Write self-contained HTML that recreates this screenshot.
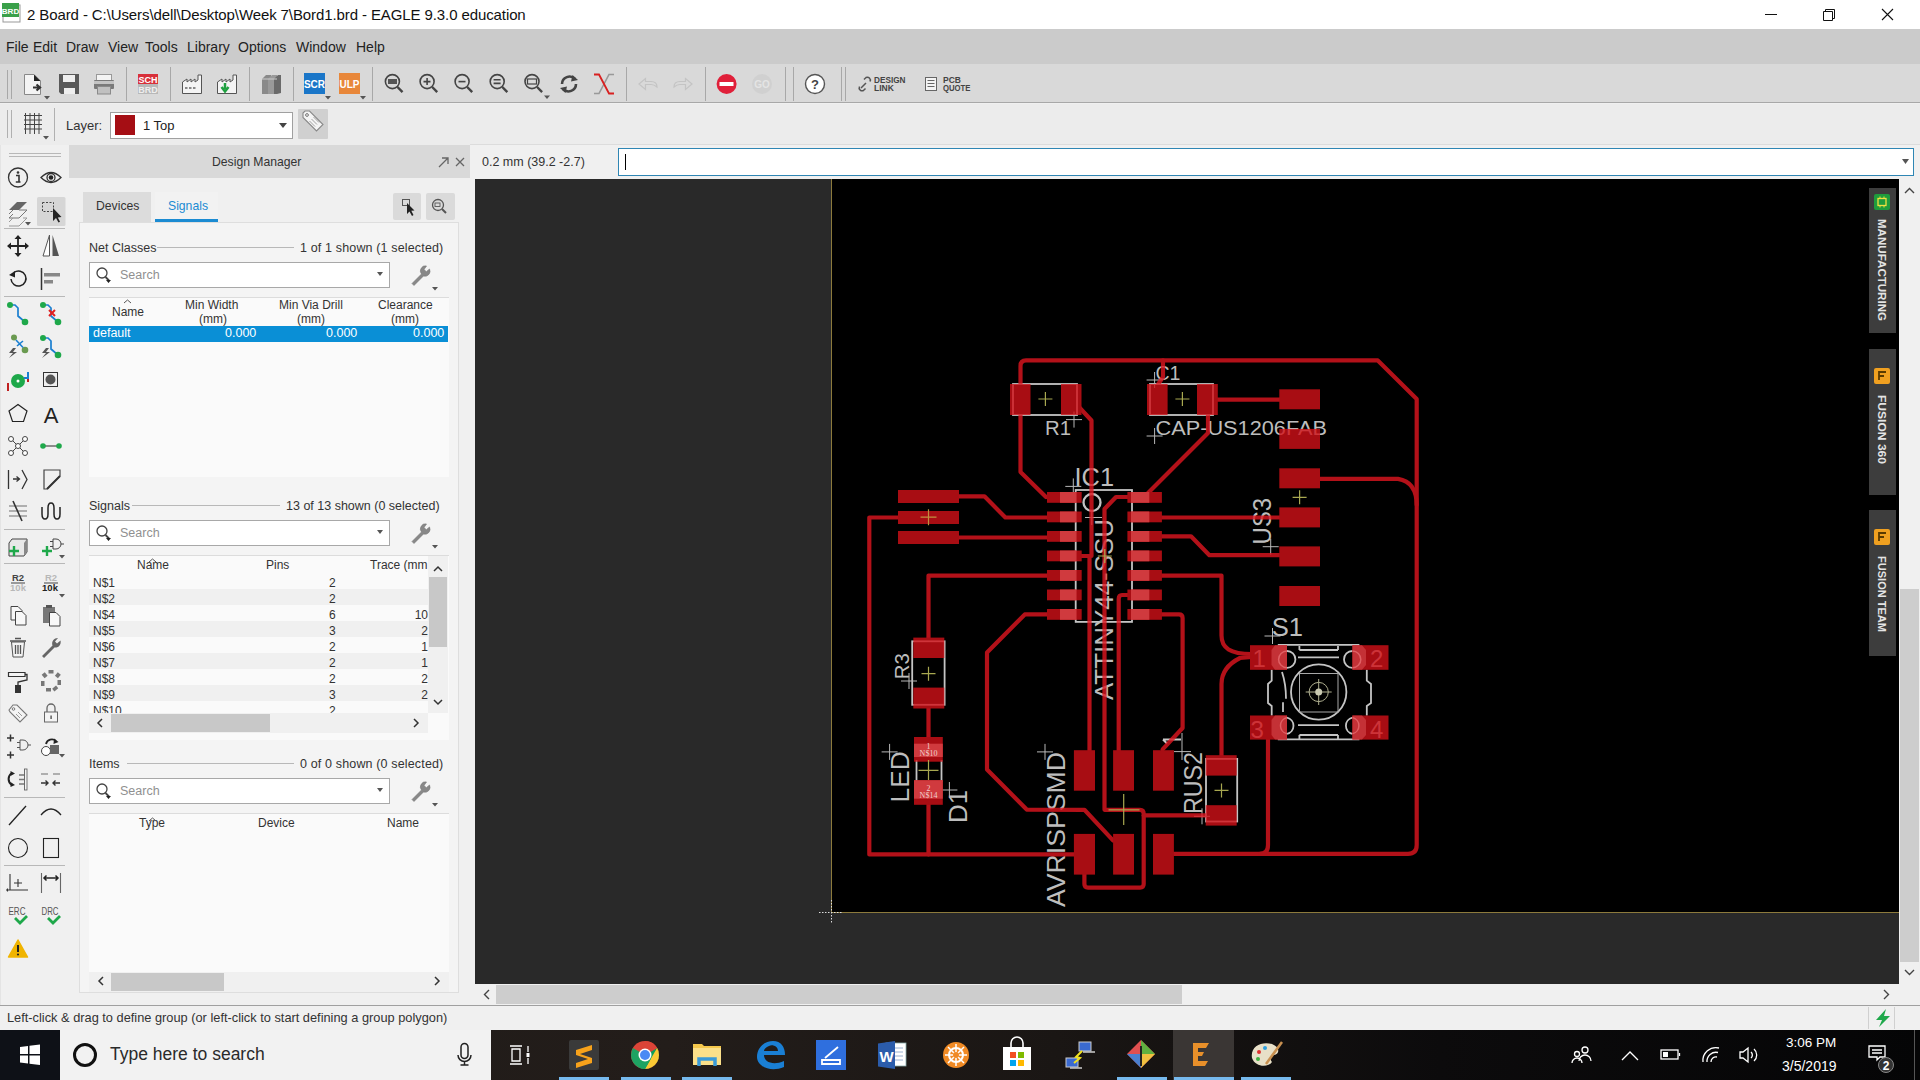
<!DOCTYPE html>
<html><head><meta charset="utf-8">
<style>
*{margin:0;padding:0;box-sizing:border-box}
html,body{width:1920px;height:1080px;overflow:hidden;background:#f0f0f0;font-family:"Liberation Sans",sans-serif;color:#333}
.a{position:absolute}
.t{position:absolute;white-space:nowrap;line-height:1}
</style></head><body>
<!-- title bar -->
<div class="a" style="left:0;top:0;width:1920px;height:29px;background:#fff"></div>
<div class="t" style="left:27px;top:7px;font-size:15px;color:#111;letter-spacing:-0.1px">2 Board - C:\Users\dell\Desktop\Week 7\Bord1.brd - EAGLE 9.3.0 education</div>
<!-- menu -->
<div class="a" style="left:0;top:29px;width:1920px;height:35px;background:#cbcbcb"></div>
<div class="t" style="left:6px;top:40px;font-size:14px;color:#222">File</div>
<div class="t" style="left:33px;top:40px;font-size:14px;color:#222">Edit</div>
<div class="t" style="left:66px;top:40px;font-size:14px;color:#222">Draw</div>
<div class="t" style="left:108px;top:40px;font-size:14px;color:#222">View</div>
<div class="t" style="left:145px;top:40px;font-size:14px;color:#222">Tools</div>
<div class="t" style="left:187px;top:40px;font-size:14px;color:#222">Library</div>
<div class="t" style="left:238px;top:40px;font-size:14px;color:#222">Options</div>
<div class="t" style="left:296px;top:40px;font-size:14px;color:#222">Window</div>
<div class="t" style="left:356px;top:40px;font-size:14px;color:#222">Help</div>
<!-- toolbar -->
<div class="a" style="left:0;top:64px;width:1920px;height:39px;background:#d9d9d9;border-bottom:1px solid #a8a8a8"></div>
<!-- layer bar -->
<div class="a" style="left:0;top:104px;width:1920px;height:41px;background:#ececec"></div>
<!-- toolbar icons -->
<svg class="a" style="left:0;top:62px" width="1000" height="44" viewBox="0 62 1000 44">
<g stroke="#a8a8a8" stroke-width="1"><path d="M7.5,70 V99 M11.5,70 V99 M126.5,67 V101 M170.5,67 V101 M249.5,67 V101 M293.5,67 V101 M372.5,67 V101 M626.5,67 V101 M705.5,67 V101 M785.5,67 V101 M793.5,67 V101 M841.5,67 V101 M845.5,67 V101"/></g>
<!-- new -->
<path d="M24.5,74.5 H34 L40.5,81 V94.5 H24.5 Z" fill="#f4f4f4" stroke="#888"/>
<path d="M34,74.5 L40.5,81 H34 Z" fill="#222"/>
<path d="M33,87.5 H39 M36.5,84.5 L40,87.5 L36.5,90.5" stroke="#333" stroke-width="2.2" fill="none"/>
<path d="M44,96 h6 l-3,3.5z" fill="#555"/>
<!-- save -->
<path d="M59,74 H79 V94 H61 L59,92 Z" fill="#595959"/>
<rect x="63" y="75" width="12" height="7" fill="#eee"/><rect x="64" y="88" width="11" height="6" fill="#eee"/>
<!-- print -->
<rect x="96.5" y="74.5" width="15" height="7" fill="#f4f4f4" stroke="#999"/>
<rect x="94" y="80" width="20" height="9" rx="1" fill="#7a7a7a"/>
<rect x="94" y="81" width="20" height="3" fill="#c4c4c4"/>
<rect x="97.5" y="86.5" width="13" height="7.5" fill="#c0c0c0" stroke="#8a8a8a"/>
<!-- sch brd -->
<rect x="138" y="74" width="20" height="10" fill="#d8303a"/><rect x="138" y="84" width="20" height="10" fill="#b8b8b8"/>
<text x="148" y="82.8" font-family="Liberation Sans" font-weight="bold" font-size="9" fill="#fff" text-anchor="middle">SCH</text>
<text x="148" y="92.8" font-family="Liberation Sans" font-weight="bold" font-size="9" fill="#eee" text-anchor="middle">BRD</text>
<!-- cam -->
<path d="M182.5,93.5 V82 L187,79 V82 L191,79 V82 L195,79 V82 L198,80 V75 H201.5 V93.5 Z" fill="#f4f4f4" stroke="#555"/>
<path d="M185,88 H197" stroke="#666" stroke-width="1.5" stroke-dasharray="2.5 1.5"/>
<path d="M217.5,93.5 V82 L222,79 V82 L226,79 V82 L230,79 V82 L233,80 V75 H236.5 V93.5 Z" fill="#f4f4f4" stroke="#555"/>
<path d="M225,83 V89 M221.5,87 L225,91.5 L228.5,87" stroke="#1fa040" stroke-width="2.5" fill="none"/>
<!-- library -->
<path d="M262,79 L266,75 H271 V94 H262 Z" fill="#8a8a8a"/><path d="M268,79 L272,75 H277 V94 H268 Z" fill="#9a9a9a"/><path d="M274,79 L278,75 H281 V93 L277,94 H274 Z" fill="#6a6a6a"/>
<path d="M262,79 H277" stroke="#ccc"/>
<!-- scr ulp -->
<rect x="304" y="73" width="21" height="21" fill="#1a76c8"/><text x="314.5" y="88" font-family="Liberation Sans" font-weight="bold" font-size="10" fill="#fff" text-anchor="middle">SCR</text>
<path d="M325,96 h6 l-3,3.5z" fill="#555"/>
<rect x="339" y="73" width="21" height="21" fill="#e8873a"/><text x="349.5" y="88" font-family="Liberation Sans" font-weight="bold" font-size="10" fill="#fff" text-anchor="middle">ULP</text>
<path d="M360,96 h6 l-3,3.5z" fill="#555"/>
<!-- zooms -->
<g fill="none" stroke="#444" stroke-width="1.6">
<circle cx="392.4" cy="81.6" r="7"/><path d="M397.5,87 L402.5,92.2" stroke-width="2.4"/>
<circle cx="427.1" cy="81.6" r="7"/><path d="M432.2,87 L437.2,92.2" stroke-width="2.4"/><path d="M423.5,81.6 h7 M427.1,78 v7"/>
<circle cx="462.1" cy="81.6" r="7"/><path d="M467.2,87 L472.2,92.2" stroke-width="2.4"/><path d="M458.5,81.6 h7"/>
<circle cx="497.2" cy="81.6" r="7"/><path d="M502.3,87 L507.3,92.2" stroke-width="2.4"/><path d="M493.6,79.8 h7 M493.6,83.4 h7"/>
<circle cx="532" cy="81.6" r="7"/><path d="M537.1,87 L542.1,92.2" stroke-width="2.4"/><rect x="527.5" y="79" width="9" height="5" stroke-width="1.2"/>
</g>
<rect x="388" y="79" width="9" height="5" fill="#555"/>
<path d="M544,95.5 h6 l-3,3.5z" fill="#555"/>
<!-- redraw -->
<path d="M562,84 A7.5,7.5 0 0 1 575,79" fill="none" stroke="#444" stroke-width="2.6"/><path d="M572.5,75 L578,80 L571,81.5Z" fill="#444"/>
<path d="M576,84 A7.5,7.5 0 0 1 563,89" fill="none" stroke="#444" stroke-width="2.6"/><path d="M565.5,93 L560,88 L567,86.5Z" fill="#444"/>
<!-- ratsnest -->
<path d="M594,93.5 H599 L609,74.5 H614" fill="none" stroke="#999" stroke-width="1.6"/>
<path d="M594,74.5 H599 L609,93.5 H614" fill="none" stroke="#d82020" stroke-width="1.8"/>
<!-- undo redo -->
<path d="M639,84 L645.5,78.5 V81.5 H651 Q657,81.5 657,87 Q654,84.5 651,84.5 H645.5 V89.5 Z" fill="none" stroke="#c4c4c4" stroke-width="1.2"/>
<path d="M692,84 L685.5,78.5 V81.5 H680 Q674,81.5 674,87 Q677,84.5 680,84.5 H685.5 V89.5 Z" fill="none" stroke="#c4c4c4" stroke-width="1.2"/>
<!-- stop / go -->
<circle cx="726.6" cy="84" r="10" fill="#e0203a"/><rect x="719.5" y="82" width="14" height="4" fill="#fff"/>
<circle cx="762" cy="84" r="10" fill="#d0d0d0"/><text x="762" y="88" font-family="Liberation Sans" font-size="10" font-weight="bold" fill="#e4e4e4" text-anchor="middle">GO</text>
<!-- help -->
<circle cx="815" cy="84" r="9.5" fill="#fff" stroke="#555" stroke-width="1.4"/><text x="815" y="89" font-family="Liberation Sans" font-weight="bold" font-size="13" fill="#444" text-anchor="middle">?</text>
<!-- design link -->
<path d="M861,88 L866,83 M859.5,86.5 a3,3 0 0 0 4,4 l2,-2 M870,81.5 a3,3 0 0 0 -4,-4 l-2,2" fill="none" stroke="#555" stroke-width="1.5"/>
<text x="874" y="83" font-family="Liberation Sans" font-weight="bold" font-size="8.5" fill="#444" textLength="31.5" lengthAdjust="spacingAndGlyphs">DESIGN</text>
<text x="874" y="91" font-family="Liberation Sans" font-weight="bold" font-size="8.5" fill="#444">LINK</text>
<rect x="925.5" y="77.5" width="11" height="13" fill="#f4f4f4" stroke="#666"/><path d="M927.5,80.5 h7 M927.5,83.5 h7 M927.5,86.5 h7" stroke="#666"/>
<text x="943" y="83" font-family="Liberation Sans" font-weight="bold" font-size="8.5" fill="#444">PCB</text>
<text x="943" y="91" font-family="Liberation Sans" font-weight="bold" font-size="8.5" fill="#444" textLength="27.5" lengthAdjust="spacingAndGlyphs">QUOTE</text>
</svg>
<!-- layer bar -->
<svg class="a" style="left:0;top:104px" width="340" height="41" viewBox="0 104 340 41">
<g stroke="#b0b0b0"><path d="M7.5,110 V138 M11.5,110 V138 M54.5,108 V141"/></g>
<g stroke="#444" stroke-width="1"><path d="M25.5,113 V134 M30,113 V134 M34.5,113 V134 M39,113 V134 M24,115.5 H42 M24,120 H42 M24,124.5 H42 M24,129 H42"/></g>
<path d="M43,136 h6 l-3,3.5z" fill="#555"/>
<rect x="110.5" y="112.5" width="182" height="26" fill="#fff" stroke="#a0a0a0"/>
<rect x="115" y="115" width="20" height="20" fill="#a50e14"/>
<path d="M279,123 h8 l-4,5z" fill="#444"/>
<rect x="298" y="109" width="30" height="30" rx="1" fill="#d0d0d0"/>
<path d="M303,117 V113 L305,111 H309.5 L323,124.5 L316.5,131 L303,117.5 Z" fill="#f4f4f4" stroke="#888" stroke-width="1.1"/>
<circle cx="307" cy="115" r="1.4" fill="none" stroke="#777"/>
<path d="M309.5,121 l5.5,5.5 M311.5,119 l5.5,5.5 M313.5,117 l5.5,5.5" stroke="#999" stroke-width="0.9"/>
</svg>
<div class="t" style="left:66px;top:119px;font-size:13px;color:#333">Layer:</div>
<div class="t" style="left:143px;top:119px;font-size:13px;color:#222">1 Top</div>

<!-- left palette -->
<div class="a" style="left:0;top:145px;width:70px;height:860px;background:#f0f0f0;border-right:1px solid #d4d4d4;border-left:1px solid #e4e4e4"></div>

<svg class="a" style="left:0;top:145px" width="69" height="860" viewBox="0 145 69 860">
<g stroke="#b8b8b8" stroke-width="1"><path d="M9,153.5 H61 M9,156.5 H61 M4,228.5 H65 M4,296.5 H65 M4,529.5 H65 M4,563.5 H65 M4,797.5 H65 M4,865.5 H65"/></g>
<rect x="37" y="197" width="28.5" height="29" rx="1.5" fill="#d6d6d6"/>
<g fill="none" stroke="#333" stroke-width="1.3">
<!-- info -->
<circle cx="18" cy="177.5" r="9.5"/>
<!-- eye -->
<path d="M41,177.5 Q51,167.5 61,177.5 Q51,187.5 41,177.5 Z"/>
<circle cx="51" cy="177.5" r="4"/>
</g>
<circle cx="18" cy="172.5" r="1.3" fill="#333"/><path d="M16,175.5 h3 v6.5 h1.5 M15.8,182 h4.5" stroke="#333" stroke-width="1.6" fill="none"/>
<circle cx="51" cy="177.5" r="2.3" fill="#222"/>
<!-- layers -->
<path d="M9,210 L17,202 H27 L19,210 Z" fill="#666"/>
<path d="M9,214 L13,210 M19,210 H27 L19,218 H9 L13,214" fill="none" stroke="#777"/>
<path d="M9,222 L13,218 M23,218 H27 L19,226 H9" fill="none" stroke="#999"/>
<path d="M25,222 h6 l-3,3.5z" fill="#555"/>
<!-- group -->
<rect x="42.5" y="202.5" width="11" height="9" fill="none" stroke="#444" stroke-dasharray="2 1.5"/>
<path d="M53,208 L53,221 L56,218 L58.5,222.5 L60,221.7 L57.8,217.5 L61.5,217 Z" fill="#222"/>
<!-- move -->
<path d="M18,236 V256 M8,246 H28" stroke="#222" stroke-width="1.8"/>
<path d="M18,235 l-3.5,4h7z M18,257 l-3.5,-4h7z M7,246 l4,-3.5v7z M29,246 l-4,-3.5v7z" fill="#222"/>
<!-- mirror -->
<path d="M49.5,235 L43,256 H49.5 Z" fill="#fff" stroke="#555"/><path d="M52.5,235 L59,256 H52.5 Z" fill="#555"/>
<!-- rotate -->
<path d="M11,279 A7.5,7.5 0 1 0 14,272.5" fill="none" stroke="#222" stroke-width="1.5"/><path d="M9,275 L15,271 L15,277.5 Z" fill="#222"/>
<!-- align -->
<path d="M41.5,268 V290" stroke="#333" stroke-width="1.5"/><rect x="44" y="273" width="16" height="3.5" fill="#888"/><rect x="44" y="280" width="9" height="3.5" fill="#888"/>
<!-- route -->
<path d="M10,305 H15 L18,308 V316 L25,322" fill="none" stroke="#1a7fd0" stroke-width="1.7"/>
<circle cx="10" cy="305" r="3" fill="#1ea84a"/><circle cx="25" cy="322" r="3.3" fill="#1ea84a"/>
<path d="M43,305 H48 L51,308 V316 L58,322" fill="none" stroke="#1a7fd0" stroke-width="1.7"/>
<circle cx="43" cy="305" r="3" fill="#1ea84a"/><circle cx="58" cy="322" r="3.3" fill="#1ea84a"/>
<path d="M49,310 l6,6 M55,310 l-6,6" stroke="#e02020" stroke-width="2"/>
<!-- autorouter / optimize -->
<circle cx="14" cy="337.5" r="3" fill="#6a9a50"/><circle cx="25" cy="350" r="3.3" fill="#6a9a50"/>
<path d="M16,340 L23,347.5 M17,346 L23,341" stroke="#1a7fd0" stroke-width="1.6"/>
<path d="M13,348 L9,353 H13 L9,358 L17,352 H13 L16,348 Z" fill="#555"/>
<path d="M43,338 H48 L51,341 V349 L58,355" fill="none" stroke="#1a7fd0" stroke-width="1.7"/>
<circle cx="43" cy="338" r="3" fill="#1ea84a"/><circle cx="58" cy="355" r="3.3" fill="#1ea84a"/>
<path d="M46,348 L42,353 H46 L42,358 L50,352 H46 L49,348 Z" fill="#555"/>
<!-- via -->
<path d="M8,391 V383 M28,382 V374" stroke="#c02020" stroke-width="2"/>
<circle cx="18" cy="381" r="7" fill="#1ea84a"/><circle cx="18" cy="381" r="1.5" fill="#fff"/>
<path d="M24,378 H28 V372" stroke="#1a7fd0" stroke-width="2" fill="none"/>
<rect x="43.5" y="372.5" width="14" height="14" fill="none" stroke="#333"/><circle cx="50.5" cy="379.5" r="5" fill="#555"/>
<!-- polygon -->
<path d="M18,404.5 L27,411 L23.5,421.5 H12.5 L9,411 Z" fill="none" stroke="#222" stroke-width="1.2"/>
<!-- text A -->
<text x="51" y="423" font-family="Liberation Sans" font-size="22" fill="#222" text-anchor="middle">A</text>
<!-- airwire -->
<g stroke="#444" fill="#fff" stroke-width="1"><path d="M11,439 L25,453 M25,439 L11,453"/><circle cx="11" cy="439" r="2.5"/><circle cx="25" cy="439" r="2.5"/><circle cx="11" cy="453" r="2.5"/><circle cx="25" cy="453" r="2.5"/><circle cx="18" cy="446" r="2.5"/></g>
<path d="M42,446 H60" stroke="#555" stroke-width="1.3"/><circle cx="43" cy="446" r="2.8" fill="#1ea84a"/><circle cx="59" cy="446" r="2.8" fill="#1ea84a"/>
<!-- attribute / miter -->
<path d="M8.5,470 V489 M13,479 H19 M16.5,476.5 L19.5,479 L16.5,481.5 M22,470 L27,479.5 L22,489" fill="none" stroke="#333" stroke-width="1.3"/>
<path d="M44,489 V470 H60 V476 L47,489 Z" fill="none" stroke="#444" stroke-width="1.2"/><path d="M47,489 L60,476" stroke="#333" stroke-width="2"/>
<!-- meander -->
<path d="M9,506 H27 M9,511 H27 M9,516 H27" stroke="#999" stroke-width="1.3"/><path d="M13,501 L22,521" stroke="#333" stroke-width="1.6"/>
<path d="M42,507 V514 Q42,519 45,519 Q48,519 48,514 V508 Q48,503 51,503 Q54,503 54,508 V514 Q54,519 57,519 Q60,519 60,514 V507" fill="none" stroke="#222" stroke-width="1.5"/>
<!-- add -->
<path d="M9,543 L12,539 H27 V552 L24,556 H9 Z" fill="#e8e8e8" stroke="#444" stroke-width="1"/>
<path d="M24,543 L27,539 V552 L24,556Z" fill="#888"/>
<path d="M9,551 H19 M14,546 V556" stroke="#1ea84a" stroke-width="2.4"/>
<path d="M53,539 h3 a5,5 0 0 1 0,10 h-3 Z M50,541.5 h3 M50,546.5 h3 M61,544 h3" fill="none" stroke="#444" stroke-width="1"/>
<path d="M42,551 H52 M47,546 V556" stroke="#1ea84a" stroke-width="2.4"/>
<path d="M59,555 h6 l-3,3.5z" fill="#555"/>
<!-- R2 10k -->
<text x="18" y="581" font-family="Liberation Sans" font-weight="bold" font-size="9.5" fill="#444" text-anchor="middle">R2</text>
<path d="M11,583 H25" stroke="#444"/>
<text x="18" y="591" font-family="Liberation Sans" font-weight="bold" font-size="9.5" fill="#b8b8b8" text-anchor="middle">10k</text>
<text x="51" y="581" font-family="Liberation Sans" font-weight="bold" font-size="9.5" fill="#b8b8b8" text-anchor="middle">R2</text>
<path d="M44,583 H58" stroke="#444"/>
<text x="50" y="591" font-family="Liberation Sans" font-weight="bold" font-size="9.5" fill="#222" text-anchor="middle">10k</text>
<path d="M59,594 h6 l-3,3.5z" fill="#555"/>
<!-- copy paste -->
<path d="M11,606.5 H18 L22,610.5 V620 H11 Z" fill="#f8f8f8" stroke="#444"/><path d="M15.5,611.5 H22 L26,615.5 V625 H15.5 Z" fill="#f8f8f8" stroke="#444"/>
<path d="M43,607 H55 V623 H43 Z" fill="#777"/><rect x="46" y="605" width="6" height="3" fill="#555"/>
<path d="M49.5,612.5 H56 L60,616.5 V626 H49.5 Z" fill="#f8f8f8" stroke="#444"/>
<!-- delete -->
<path d="M11.5,642 H24.5 L23,657 H13 Z" fill="#f4f4f4" stroke="#555"/><path d="M10,641 H26 M15,638.5 H21" stroke="#555" stroke-width="1.4"/>
<path d="M15.5,645 V654 M18,645 V654 M20.5,645 V654" stroke="#555" stroke-width="1.3"/>
<!-- wrench -->
<path d="M42,656 L52.5,645.5 A5.5,5.5 0 0 1 58,638 L55,641.5 L57,643.5 L60.5,640.5 A5.5,5.5 0 0 1 54.5,647.5 L44,658 Z" fill="#666"/>
<!-- paint -->
<path d="M8.5,672.5 H25 V676.5 H8.5 Z" fill="#f4f4f4" stroke="#333" stroke-width="1.2"/><path d="M25,674.5 H27 V680 L18,682 V686" fill="none" stroke="#333" stroke-width="1.3"/><rect x="15" y="685" width="6" height="8" fill="#333"/>
<!-- polygon dots -->
<g fill="#777"><rect x="48.5" y="670" width="5" height="3.5"/><rect x="56" y="673" width="4" height="4.5" transform="rotate(40 58 675)"/><rect x="57.5" y="680" width="3.5" height="5"/><rect x="53" y="687" width="5" height="3.5" transform="rotate(-40 55 689)"/><rect x="46" y="688" width="5" height="3.5"/><rect x="41" y="681" width="3.5" height="5"/><rect x="42.5" y="673" width="4" height="4.5" transform="rotate(-40 44.5 675)"/></g>
<!-- tag -->
<path d="M9,710 L13,705 H17 L27,715 L20,722 L10,712 Z" fill="#f4f4f4" stroke="#777" stroke-width="1.1"/><circle cx="13.5" cy="709" r="1.3" fill="none" stroke="#777"/><path d="M16,714 l4,4 M18,712 l4,4" stroke="#999"/>
<!-- lock -->
<rect x="44.5" y="712" width="13" height="10" fill="#f4f4f4" stroke="#666"/><path d="M47,712 V708 A4,4 0 0 1 55,708 V712" fill="none" stroke="#666" stroke-width="1.3"/><rect x="50.3" y="715.5" width="1.6" height="3.5" fill="#666"/>
<!-- gate add -->
<path d="M7,738 H14 M10.5,734.5 V741.5 M7,755 H14 M10.5,751.5 V758.5" stroke="#333" stroke-width="1.5"/>
<path d="M20,740 h3 a5,5 0 0 1 0,10 h-3 Z M17,742.5 h3 M17,747.5 h3 M28,745 h3" fill="none" stroke="#555" stroke-width="1"/>
<!-- replace -->
<circle cx="46" cy="751" r="4.5" fill="#fff" stroke="#444"/><rect x="50" y="745" width="9" height="9" fill="#666"/>
<path d="M46,744 A6,6 0 0 1 56,741" fill="none" stroke="#222" stroke-width="1.8"/><path d="M54,738.5 L58.5,742 L53.5,744Z" fill="#222"/>
<path d="M59,754 h6 l-3,3.5z" fill="#555"/>
<!-- swap -->
<path d="M12,773 A7,7 0 0 0 12,785" fill="none" stroke="#222" stroke-width="2"/><path d="M10.5,771 L15,773.5 L10.5,776Z M10.5,782 L15,785 L10.5,787Z" fill="#222"/>
<path d="M25,770 V789 M19,775 H25 M19,779.5 H25 M19,784 H25" stroke="#777" stroke-width="1.4" fill="none"/><rect x="24.5" y="769" width="2.5" height="21" fill="#f4f4f4" stroke="#555" stroke-width="0.8"/>
<path d="M41,774 H48 M53,774 H60" stroke="#999" stroke-width="1.4"/>
<path d="M41,783 H48 M45.5,780.5 L48,783 L45.5,785.5 M60,783 H53 M55.5,780.5 L53,783 L55.5,785.5" fill="none" stroke="#333" stroke-width="1.4"/>
<!-- line arc -->
<path d="M9,825 L26,806" stroke="#222" stroke-width="1.3"/>
<path d="M41,815 Q51,803 61,815" fill="none" stroke="#222" stroke-width="1.3"/>
<!-- circle rect -->
<circle cx="18" cy="848" r="9.5" fill="none" stroke="#222" stroke-width="1.1"/>
<rect x="43.5" y="838.5" width="15" height="19" fill="none" stroke="#222" stroke-width="1.1"/>
<!-- mark / dimension -->
<path d="M10,874 V890 M7,890 H28 M18,879 V887 M14,883 H22 M7.5,888.5 v3 M6,890 h3" stroke="#333" stroke-width="1.1" fill="none"/>
<path d="M41.5,873 V893 M60.5,873 V893" stroke="#666" stroke-width="1.1"/><path d="M44,878 H58 M46.5,875.5 L44,878 L46.5,880.5 M55.5,875.5 L58,878 L55.5,880.5" fill="none" stroke="#222" stroke-width="1.5"/>
<!-- erc drc -->
<text x="17" y="915" font-family="Liberation Sans" font-size="10.5" fill="#555" text-anchor="middle" textLength="17" lengthAdjust="spacingAndGlyphs">ERC</text>
<path d="M15,918 L20,923 L27,916" fill="none" stroke="#1ea84a" stroke-width="2.8"/>
<text x="50" y="915" font-family="Liberation Sans" font-size="10.5" fill="#555" text-anchor="middle" textLength="17" lengthAdjust="spacingAndGlyphs">DRC</text>
<path d="M48,918 L53,923 L60,916" fill="none" stroke="#1ea84a" stroke-width="2.8"/>
<!-- warning -->
<path d="M18,940 L27.5,957 H8.5 Z" fill="#f0b400" stroke="#f0b400" stroke-linejoin="round" stroke-width="1.5"/>
<path d="M18,945 V952" stroke="#222" stroke-width="2"/><circle cx="18" cy="954.5" r="1.1" fill="#222"/>
</svg>

<!-- design manager -->
<div class="a" style="left:69px;top:145px;width:401px;height:33px;background:#d9d9d9"></div>
<div class="t" style="left:212px;top:156px;font-size:12.2px;color:#333">Design Manager</div>
<svg class="a" style="left:430px;top:150px" width="40" height="24"><path d="M9,17 L18,8 M12,8 H18 V14" stroke="#666" stroke-width="1.3" fill="none"/><path d="M26,8 L34,16 M34,8 L26,16" stroke="#666" stroke-width="1.3"/></svg>
<div class="a" style="left:69px;top:178px;width:401px;height:827px;background:#f0f0f0"></div>
<div class="a" style="left:83px;top:192px;width:68px;height:30px;background:#dcdcdc"></div>
<div class="t" style="left:96px;top:200px;font-size:12.2px;color:#333">Devices</div>
<div class="a" style="left:155px;top:192px;width:63px;height:30px;background:#f2f2f2;border-bottom:3px solid #1b8bd2"></div>
<div class="t" style="left:168px;top:200px;font-size:12.2px;color:#1b8bd2">Signals</div>
<div class="a" style="left:393px;top:193px;width:28px;height:27px;background:#dadada;border-radius:2px"></div>
<div class="a" style="left:426px;top:193px;width:29px;height:27px;background:#dadada;border-radius:2px"></div>
<svg class="a" style="left:393px;top:193px" width="62" height="27">
<rect x="9.5" y="6.5" width="7" height="6" fill="none" stroke="#555"/><path d="M14,10 L14,21 L16.5,18.5 L19,23 L20.5,22 L18.3,17.8 L21.5,17.5 Z" fill="#222"/>
<circle cx="45" cy="12" r="5.5" fill="none" stroke="#555" stroke-width="1.3"/><path d="M49,16 L53,20" stroke="#555" stroke-width="2"/><rect x="42" y="10" width="5" height="3.5" fill="none" stroke="#555" stroke-width="0.9"/>
</svg>
<div class="a" style="left:79px;top:222px;width:380px;height:771px;background:#f4f4f4;border:1px solid #dedede"></div>

<!-- net classes -->
<div class="t" style="left:89px;top:242px;font-size:12.5px;color:#333">Net Classes</div>
<div class="a" style="left:157px;top:247px;width:137px;height:1px;background:#b8b8b8"></div>
<div class="t" style="left:300px;top:242px;font-size:12.5px;color:#333;letter-spacing:0.15px">1 of 1 shown (1 selected)</div>
<div class="a" style="left:89px;top:262px;width:301px;height:26px;background:#fff;border:1px solid #a8a8a8"></div>
<div class="t" style="left:120px;top:269px;font-size:12.5px;color:#909090">Search</div>
<div class="a" style="left:89px;top:297px;width:360px;height:180px;background:#fafafa;border-top:1px solid #dcdcdc"></div>
<div class="t" style="left:112px;top:306px;font-size:12px;color:#333">Name</div>
<div class="t" style="left:185px;top:299px;font-size:12px;color:#333">Min Width</div>
<div class="t" style="left:199px;top:313px;font-size:12px;color:#333">(mm)</div>
<div class="t" style="left:279px;top:299px;font-size:12px;color:#333">Min Via Drill</div>
<div class="t" style="left:297px;top:313px;font-size:12px;color:#333">(mm)</div>
<div class="t" style="left:378px;top:299px;font-size:12px;color:#333">Clearance</div>
<div class="t" style="left:391px;top:313px;font-size:12px;color:#333">(mm)</div>
<div class="a" style="left:89px;top:326px;width:359px;height:16px;background:#0a8fd6"></div>
<div class="t" style="left:93px;top:327px;font-size:12.5px;color:#fff">default</div>
<div class="t" style="left:225px;top:327px;font-size:12.5px;color:#fff">0.000</div>
<div class="t" style="left:326px;top:327px;font-size:12.5px;color:#fff">0.000</div>
<div class="t" style="left:413px;top:327px;font-size:12.5px;color:#fff">0.000</div>

<!-- signals -->
<div class="t" style="left:89px;top:500px;font-size:12.5px;color:#333">Signals</div>
<div class="a" style="left:132px;top:505px;width:148px;height:1px;background:#b8b8b8"></div>
<div class="t" style="left:286px;top:500px;font-size:12.5px;color:#333">13 of 13 shown (0 selected)</div>
<div class="a" style="left:89px;top:520px;width:301px;height:26px;background:#fff;border:1px solid #a8a8a8"></div>
<div class="t" style="left:120px;top:527px;font-size:12.5px;color:#909090">Search</div>
<div class="a" style="left:89px;top:555px;width:360px;height:185px;background:#fafafa;border-top:1px solid #dcdcdc"></div>
<div class="t" style="left:137px;top:559px;font-size:12px;color:#333">Name</div>
<div class="t" style="left:266px;top:559px;font-size:12px;color:#333">Pins</div>
<div class="t" style="left:370px;top:559px;font-size:12px;color:#333">Trace (mm</div>
<div class="a" style="left:89px;top:589px;width:339px;height:16px;background:#f0f0f0"></div>
<div class="a" style="left:89px;top:621px;width:339px;height:16px;background:#f0f0f0"></div>
<div class="a" style="left:89px;top:653px;width:339px;height:16px;background:#f0f0f0"></div>
<div class="a" style="left:89px;top:685px;width:339px;height:16px;background:#f0f0f0"></div>
<div style="position:absolute;left:93px;top:575px;font-size:12px;line-height:16px;color:#333;white-space:pre">N$1
N$2
N$4
N$5
N$6
N$7
N$8
N$9
N$10</div>
<div style="position:absolute;left:329px;top:575px;font-size:12px;line-height:16px;color:#333;white-space:pre;height:138px;overflow:hidden">2
2
6
3
2
2
2
3
2</div>
<div style="position:absolute;left:414px;top:575px;width:14px;font-size:12px;line-height:16px;color:#333;white-space:pre;overflow:hidden;height:138px;text-align:right"> 
 
10
 2
 1
 1
 2
 2
 </div>
<div class="a" style="left:89px;top:713px;width:360px;height:27px;background:#fafafa"></div>
<div class="a" style="left:428px;top:556px;width:20px;height:157px;background:#f0f0f0"></div>
<div class="a" style="left:429px;top:577px;width:18px;height:70px;background:#c8c8c8"></div>
<div class="a" style="left:89px;top:713px;width:339px;height:20px;background:#f0f0f0"></div>
<div class="a" style="left:111px;top:714px;width:159px;height:18px;background:#c8c8c8"></div>

<!-- items -->
<div class="t" style="left:89px;top:758px;font-size:12.5px;color:#333">Items</div>
<div class="a" style="left:127px;top:763px;width:167px;height:1px;background:#b8b8b8"></div>
<div class="t" style="left:300px;top:758px;font-size:12.5px;color:#333;letter-spacing:0.15px">0 of 0 shown (0 selected)</div>
<div class="a" style="left:89px;top:778px;width:301px;height:26px;background:#fff;border:1px solid #a8a8a8"></div>
<div class="t" style="left:120px;top:785px;font-size:12.5px;color:#909090">Search</div>
<div class="a" style="left:89px;top:813px;width:360px;height:159px;background:#fafafa;border-top:1px solid #dcdcdc"></div>
<div class="t" style="left:139px;top:817px;font-size:12px;color:#333">Type</div>
<div class="t" style="left:258px;top:817px;font-size:12px;color:#333">Device</div>
<div class="t" style="left:387px;top:817px;font-size:12px;color:#333">Name</div>
<div class="a" style="left:89px;top:972px;width:360px;height:20px;background:#f0f0f0"></div>
<div class="a" style="left:111px;top:973px;width:113px;height:18px;background:#c8c8c8"></div>

<svg class="a" style="left:69px;top:178px" width="401" height="827" viewBox="69 178 401 827">
<g fill="none" stroke="#444" stroke-width="1.3">
<circle cx="102" cy="273" r="5"/><path d="M105.5,277 L109,280.5" stroke-width="1.8"/>
<circle cx="102" cy="531" r="5"/><path d="M105.5,535 L109,538.5" stroke-width="1.8"/>
<circle cx="102" cy="789" r="5"/><path d="M105.5,793 L109,796.5" stroke-width="1.8"/>
</g>
<path d="M106,280 h5 l-2.5,3z M106,538 h5 l-2.5,3z M106,796 h5 l-2.5,3z" fill="#222"/>
<path d="M377,272 h6 l-3,4z M377,530 h6 l-3,4z M377,788 h6 l-3,4z" fill="#555"/>
<g fill="#888" stroke="#777" stroke-width="0.6">
<path d="M412,283.5 L421.5,274 A5,5 0 0 1 426.5,266 L424,269.5 L426.3,271.7 L429.5,269 A5,5 0 0 1 423.5,276 L414,285.5 Z"/>
<path d="M412,541.5 L421.5,532 A5,5 0 0 1 426.5,524 L424,527.5 L426.3,529.7 L429.5,527 A5,5 0 0 1 423.5,534 L414,543.5 Z"/>
<path d="M412,799.5 L421.5,790 A5,5 0 0 1 426.5,782 L424,785.5 L426.3,787.7 L429.5,785 A5,5 0 0 1 423.5,792 L414,801.5 Z"/>
</g>
<path d="M432,287 h6 l-3,3.5z M432,545 h6 l-3,3.5z M432,803 h6 l-3,3.5z" fill="#555"/>
<g fill="none" stroke="#555" stroke-width="1"><path d="M124,303 l3.5,-3 l3.5,3 M149,562 l3.5,-3 l3.5,3 M149,821 l3.5,-3 l3.5,3"/></g>
<g fill="none" stroke="#333" stroke-width="1.5"><path d="M434,571 l4,-4 l4,4 M434,700 l4,4 l4,-4 M102,719 l-4,4 l4,4 M414,719 l4,4 l-4,4 M103,977 l-4,4 l4,4 M435,977 l4,4 l-4,4"/></g>
</svg>
<!-- canvas -->
<div class="a" style="left:470px;top:144px;width:1450px;height:1px;background:#dcdcdc"></div>
<div class="a" style="left:470px;top:145px;width:1450px;height:34px;background:#f0f0f0"></div>
<div class="t" style="left:482px;top:156px;font-size:12.5px;color:#333">0.2 mm (39.2 -2.7)</div>
<div class="a" style="left:618px;top:148px;width:1296px;height:28px;background:#fff;border:1px solid #2f86b4"></div>
<div class="a" style="left:625px;top:154px;width:1px;height:16px;background:#000"></div>
<svg class="a" style="left:1900px;top:155px" width="12" height="12"><path d="M2,4 h7 l-3.5,5z" fill="#555"/></svg>
<div class="a" style="left:475px;top:179px;width:1424px;height:805px;background:#292929"></div>
<div class="a" style="left:831px;top:179px;width:1068px;height:734px;background:#000;border-left:1px solid #8c7a3c;border-bottom:1px solid #8c7a3c"></div>
<svg class="a" style="left:815px;top:896px" width="32" height="32"><path d="M4,16.5 H28 M16.5,4 V28" stroke="#ddd" stroke-width="1" stroke-dasharray="1.5 1.5"/></svg>
<!-- right panels -->
<div class="a" style="left:1869px;top:188px;width:27px;height:145px;background:#3d3d3d"></div>
<div class="a" style="left:1869px;top:349px;width:27px;height:146px;background:#3d3d3d"></div>
<div class="a" style="left:1869px;top:510px;width:27px;height:146px;background:#3d3d3d"></div>
<svg class="a" style="left:1869px;top:188px" width="27" height="470" viewBox="1869 188 27 470">
<rect x="1874" y="194" width="16" height="16" rx="2" fill="#1e9c3c"/><rect x="1878" y="198.5" width="8" height="7" fill="none" stroke="#f0e040" stroke-width="1.3"/>
<path d="M1880,196.5 v2 M1884,196.5 v2 M1880,205.5 v2 M1884,205.5 v2" stroke="#f0e040" stroke-width="1"/>
<rect x="1874" y="368" width="16" height="16" rx="2" fill="#f0a020"/><path d="M1879,380 V372 H1886 M1879,376 H1884" fill="none" stroke="#5a3a00" stroke-width="1.8"/>
<rect x="1874" y="529" width="16" height="16" rx="2" fill="#f0a020"/><path d="M1879,541 V533 H1886 M1879,537 H1884" fill="none" stroke="#5a3a00" stroke-width="1.8"/>
<g font-family="Liberation Sans" font-weight="bold" font-size="11" fill="#e4e4e4">
<text transform="translate(1877.5,219) rotate(90)" textLength="102" lengthAdjust="spacingAndGlyphs">MANUFACTURING</text>
<text transform="translate(1877.5,395) rotate(90)" textLength="69" lengthAdjust="spacingAndGlyphs">FUSION 360</text>
<text transform="translate(1877.5,556) rotate(90)" textLength="76" lengthAdjust="spacingAndGlyphs">FUSION TEAM</text>
</g>
</svg>
<!-- vertical scrollbar -->
<div class="a" style="left:1899px;top:179px;width:21px;height:805px;background:#f0f0f0"></div>
<div class="a" style="left:1900px;top:589px;width:19px;height:373px;background:#cdcdcd"></div>
<svg class="a" style="left:1899px;top:179px" width="21" height="805"><path d="M6,14 l4.5,-4.5 l4.5,4.5 M6,791 l4.5,4.5 l4.5,-4.5" fill="none" stroke="#444" stroke-width="1.4"/></svg>
<!-- horizontal scrollbar -->
<div class="a" style="left:475px;top:984px;width:1445px;height:21px;background:#f0f0f0"></div>
<div class="a" style="left:496px;top:985px;width:686px;height:19px;background:#cdcdcd"></div>
<svg class="a" style="left:475px;top:984px" width="1425" height="21"><path d="M14,6 l-4.5,4.5 l4.5,4.5 M1409,6 l4.5,4.5 l-4.5,4.5" fill="none" stroke="#444" stroke-width="1.4"/></svg>
<svg class="a" style="left:0;top:0" width="1920" height="1080" viewBox="0 0 1920 1080">
<!-- silkscreen outlines -->
<g fill="none" stroke="#c4c4c4" stroke-width="1.8">
<rect x="1013" y="384" width="64" height="31"/>
<rect x="1150" y="384" width="63" height="31"/>
<rect x="1075.7" y="490" width="56.3" height="131.9"/>
<circle cx="1092" cy="502.5" r="8.5" stroke-width="2.3"/>
<rect x="912.2" y="641.3" width="32.4" height="63.5"/>
<line x1="916.5" y1="760" x2="916.5" y2="782"/><line x1="941.5" y1="760" x2="941.5" y2="782"/>
<rect x="1206" y="758.9" width="31.2" height="62.6"/>
</g>
<g fill="none" stroke="#c4c4c4" stroke-width="1.8">
<path d="M1277.8,644.8 H1359.4 M1277.8,739.3 H1359.4"/>
<path d="M1271.7,669.8 V680.6 L1268,684 V703 L1271.7,706 V715.5 M1366.8,669.8 V680.6 L1371,684 V703 L1366.8,706 V715.5"/>
<path d="M1299.4,650 H1338 M1298,657.3 H1339 M1298,725.2 H1339 M1299.4,735 H1338"/>
<path d="M1299.4,646 V650 M1338,646 V650 M1299.4,739 V735 M1338,739 V735"/>
<circle cx="1318.7" cy="692" r="27.7"/>
<path d="M1282,672 Q1286,684 1286,698.7 M1283,702.3 V712"/>
<path d="M1287,651 A8.3,8.3 0 0 1 1287,667.8 M1287,717.6 A8.3,8.3 0 0 1 1287,733.8 M1352.4,651 A8.3,8.3 0 0 0 1352.4,667.8 M1352.4,717.6 A8.3,8.3 0 0 0 1352.4,733.8"/>
</g>
<g fill="none" stroke="#a8a8a8" stroke-width="1">
<rect x="1299.5" y="673.5" width="38.5" height="38.5"/>
</g>
<g fill="none" stroke="#b0b090" stroke-width="1">
<circle cx="1318.7" cy="692" r="9.6"/>
<path d="M1305.7,692 h26 M1318.7,679 v26"/>
</g>
<circle cx="1318.7" cy="692" r="3.5" fill="#c8c8b0"/>

<g font-family="Liberation Sans" fill="#bdbdbd">
<text x="1045" y="435" font-size="20.5" textLength="26" lengthAdjust="spacingAndGlyphs">R1</text>
<text x="1155.5" y="380" font-size="20" textLength="25" lengthAdjust="spacingAndGlyphs">C1</text>
<text x="1155.5" y="434.5" font-size="20" textLength="171.5" lengthAdjust="spacingAndGlyphs">CAP-US1206FAB</text>
<text x="1074.5" y="486" font-size="26" textLength="39.5" lengthAdjust="spacingAndGlyphs">IC1</text>
<text x="1271.7" y="636" font-size="25" textLength="31.3" lengthAdjust="spacingAndGlyphs">S1</text>
<text transform="translate(1113,700) rotate(-90)" font-size="26" textLength="181" lengthAdjust="spacingAndGlyphs">ATTINY44-SSU</text>
<text transform="translate(1270.7,544.4) rotate(-90)" font-size="26.5" textLength="46.6" lengthAdjust="spacingAndGlyphs">US3</text>
<text transform="translate(908.5,679.3) rotate(-90)" font-size="21" textLength="26" lengthAdjust="spacingAndGlyphs">R3</text>
<text transform="translate(909,802.4) rotate(-90)" font-size="25" textLength="51" lengthAdjust="spacingAndGlyphs">LED</text>
<text transform="translate(967.4,823) rotate(-90)" font-size="26" textLength="33" lengthAdjust="spacingAndGlyphs">D1</text>
<text transform="translate(1065,907) rotate(-90)" font-size="26.5" textLength="155" lengthAdjust="spacingAndGlyphs">AVRISPSMD</text>
<text transform="translate(1201.8,814) rotate(-90)" font-size="25.5" textLength="62" lengthAdjust="spacingAndGlyphs">RUS2</text>
<path d="M1163,739.5 H1181 M1163,739.5 L1167,743.5" stroke="#c8c8c8" stroke-width="2" fill="none"/>
</g>

<g fill="#bdbdbd" font-family="Liberation Sans" font-size="24">
<text x="1252.5" y="667">1</text><text x="1370" y="667">2</text><text x="1250.5" y="738">3</text><text x="1370" y="738">4</text>
</g>
<!-- origin crosses gray -->
<g stroke="#b8b8b8" stroke-width="1" fill="none">
<path d="M1066,419.6 h16 M1074,411.6 v16"/>
<path d="M1146.6,380 h16 M1154.6,372 v16"/>
<path d="M1146.6,436 h16 M1154.6,428 v16"/>
<path d="M1065.3,486.4 h16 M1073.3,478.4 v16"/>
<path d="M1264.5,636 h16 M1272.5,628 v16"/>
<path d="M1085,517.5 h17 M1091.8,510 v15"/>
<path d="M1262.7,546.7 h16 M1270.7,538.7 v16"/>
<path d="M901,681 h16 M909,673 v16"/>
<path d="M881.6,751.9 h16 M889.6,743.9 v16"/>
<path d="M941.4,790 h16 M949.4,782 v16"/>
<path d="M1037,751.9 h16 M1045,743.9 v16"/>
<path d="M1194,816.3 h16 M1202,808.3 v16"/>
<path d="M1174,751.6 h17 M1182,733 v27"/>
</g>
<g opacity="0.8">
<g fill="none" stroke="#e01620" stroke-width="4.2" stroke-linejoin="round" stroke-linecap="round">
<path d="M1046,497 L1020.5,472 L1020.5,366 Q1020.5,360.4 1026,360.4 L1377.8,360.4 L1416.7,399 L1416.7,845 Q1416.7,853.8 1408,853.8 L1174,853.8"/>
<path d="M1163,360.4 L1163,377 L1157,386"/>
<path d="M1078,406 L1091.5,420.5 L1091.5,556 L1081,556 M1089.5,556 L1089.5,752"/>
<path d="M1150,497 L1116,497 L1104.5,509 L1104.5,809.8 L1140,809.8 Q1143.7,809.8 1143.7,814 L1143.7,884 Q1143.7,887.6 1140,887.6 L1088,887.6 Q1084.4,887.6 1084.4,884 L1084.4,872"/>
<path d="M1208,413 L1208,433 L1148,493"/>
<path d="M1215,399.6 L1281,399.6"/>
<path d="M1318,478.9 L1398,478.9 Q1416.7,482 1416.7,505"/>
<path d="M1150,517.5 L1281,517.5"/>
<path d="M1150,536.3 L1191,536.3 L1209.4,555.2 L1281,555.2"/>
<path d="M1150,575.6 L1221.5,575.6 L1221.5,635.6 C1221.5,648 1230,654 1252,654"/>
<path d="M1252,657 L1240,658 C1228,664 1221.5,672 1221.5,684 L1221.5,757"/>
<path d="M1150,614.4 L1179,614.4 Q1182.6,614.4 1182.6,618 L1182.6,728 L1162.6,749.4"/>
<path d="M1130,595 L1122,595 Q1118.7,595 1118.7,599 L1118.7,752"/>
<path d="M959,496.3 L984.4,496.3 L1005.4,517.5 L1050,517.5"/>
<path d="M900,517.5 L869.3,517.5 L869.3,854.4 L1076,854.4"/>
<path d="M959,537.5 L1050,537.5"/>
<path d="M1050,575.6 L928.5,575.6 L928.5,640"/>
<path d="M928.5,706 L928.5,740 M928.5,802 L928.5,854.4"/>
<path d="M1050,614.4 L1024.8,614.4 L987,652.4 L987,769.6 L1026.7,809.6 L1084.4,809.8 L1113,840.4"/>
<path d="M1143.7,815.4 L1208,815.4"/>
<path d="M1268,739 L1268,845 Q1268,853.8 1260,853.8"/>
</g>
<g fill="#d21118">
<rect x="1010" y="384" width="20.5" height="31"/><rect x="1061" y="384" width="20.5" height="31"/>
<rect x="1147" y="384" width="20.6" height="31"/><rect x="1197" y="384" width="20.8" height="31"/>
<rect x="1279.3" y="389.3" width="40.7" height="20"/><rect x="1279.3" y="428.9" width="40.7" height="20"/>
<rect x="1279.3" y="468.3" width="40.7" height="20"/><rect x="1279.3" y="507.4" width="40.7" height="20"/>
<rect x="1279.3" y="546.4" width="40.7" height="20"/><rect x="1279.3" y="586" width="40.7" height="20"/>
<rect x="898" y="490" width="61" height="13"/><rect x="898" y="511" width="61" height="13"/><rect x="898" y="531" width="61" height="13"/>
<rect x="913.3" y="637.6" width="31" height="20.4"/><rect x="913.3" y="687.6" width="31" height="20.9"/>
<rect x="914" y="737" width="28.8" height="24.7"/><rect x="914" y="780.2" width="28.8" height="24.6"/>
<rect x="1073.9" y="750.2" width="21.1" height="40.5"/><rect x="1113.1" y="750.2" width="20.9" height="40.5"/><rect x="1153" y="750.2" width="20.9" height="40.5"/>
<rect x="1073.9" y="833.9" width="21.1" height="40.7"/><rect x="1113.1" y="833.9" width="20.9" height="40.7"/><rect x="1153" y="833.9" width="20.9" height="40.7"/>
<rect x="1205.7" y="755.2" width="31" height="20.4"/><rect x="1205.7" y="805.2" width="31" height="20.4"/>
<rect x="1250" y="645.2" width="37" height="24.6"/><rect x="1352.4" y="645.2" width="36.1" height="24.6"/>
<rect x="1250" y="715.5" width="37" height="24.1"/><rect x="1352.4" y="715.5" width="36.1" height="24.1"/>
</g>
<g fill="#d21118" id="icpins">
<rect x="1047" y="492" width="34.7" height="10.8"/><rect x="1047" y="511.5" width="34.7" height="10.8"/>
<rect x="1047" y="531" width="34.7" height="10.8"/><rect x="1047" y="550.5" width="34.7" height="10.8"/>
<rect x="1047" y="570" width="34.7" height="10.8"/><rect x="1047" y="589.5" width="34.7" height="10.8"/>
<rect x="1047" y="609" width="34.7" height="10.8"/>
<rect x="1127.4" y="492" width="34.5" height="10.8"/><rect x="1127.4" y="511.5" width="34.5" height="10.8"/>
<rect x="1127.4" y="531" width="34.5" height="10.8"/><rect x="1127.4" y="550.5" width="34.5" height="10.8"/>
<rect x="1127.4" y="570" width="34.5" height="10.8"/><rect x="1127.4" y="589.5" width="34.5" height="10.8"/>
<rect x="1127.4" y="609" width="34.5" height="10.8"/>
</g>
</g>
<g fill="#d03a3e">
<rect x="1060" y="492" width="16" height="10.8"/><rect x="1060" y="511.5" width="16" height="10.8"/>
<rect x="1060" y="531" width="16" height="10.8"/><rect x="1060" y="550.5" width="16" height="10.8"/>
<rect x="1060" y="570" width="16" height="10.8"/><rect x="1060" y="589.5" width="16" height="10.8"/>
<rect x="1060" y="609" width="16" height="10.8"/>
<rect x="1131" y="492" width="18.3" height="10.8"/><rect x="1131" y="511.5" width="18.3" height="10.8"/>
<rect x="1131" y="531" width="18.3" height="10.8"/><rect x="1131" y="550.5" width="18.3" height="10.8"/>
<rect x="1131" y="570" width="18.3" height="10.8"/><rect x="1131" y="589.5" width="18.3" height="10.8"/>
<rect x="1131" y="609" width="18.3" height="10.8"/>
<rect x="914" y="743.7" width="28.8" height="13.3"/><rect x="914" y="780.2" width="28.8" height="18.5"/>
</g>

<!-- S1 switch silk -->
<g fill="#c8353a" opacity="0.9">
<path d="M1275,645.2 H1287 V669.8 H1275 L1271.5,665 V650 Z"/>
<path d="M1352.4,645.2 H1362 L1366,650 V665 L1362,669.8 H1352.4 Z"/>
<path d="M1275,715.5 H1287 V739.6 H1275 L1271.5,735 V720 Z"/>
<path d="M1352.4,715.5 H1362 L1366,720 V735 L1362,739.6 H1352.4 Z"/>
</g>
<g fill="none" stroke="#e06064" stroke-width="1.5">
<path d="M1287,651 A8.3,8.3 0 0 0 1287,667.8 M1287,717.6 A8.3,8.3 0 0 0 1287,733.8 M1352.4,651 A8.3,8.3 0 0 1 1352.4,667.8 M1352.4,717.6 A8.3,8.3 0 0 1 1352.4,733.8"/>
</g>
<!-- center crosses -->
<g stroke="#a8a850" stroke-width="1.2" fill="none">
<path d="M1038.4,399 h14 M1045.4,392 v14"/>
<path d="M1175.4,399 h14 M1182.4,392 v14"/>
<path d="M1292.6,497.3 h14 M1299.6,490.3 v14"/>
<path d="M1097.8,556 h14 M1104.8,549 v14"/>
<path d="M921.5,673.7 h14 M928.5,666.7 v14"/>
<path d="M918.5,770.4 h20 M928.5,760 v20"/>
<path d="M1108.5,809.8 h31 M1123.7,794 v31"/>
<path d="M1214.5,790.4 h14 M1221.5,783.4 v14"/>
</g>
<g stroke="#c09040" stroke-width="1.2" fill="none"><path d="M920.5,517.2 h16 M928.5,509.2 v16"/></g>
<g fill="#f0d0d0" font-family="Liberation Serif" font-size="8" text-anchor="middle">
<text x="928.5" y="749">1</text><text x="928.5" y="756">N$10</text>
<text x="928.5" y="791">2</text><text x="928.5" y="798">N$14</text>
</g>
</svg>

<!-- status bar -->
<div class="a" style="left:0;top:1005px;width:1920px;height:25px;background:#f0f0f0;border-top:1px solid #a0a0a0"></div>
<div class="t" style="left:7px;top:1012px;font-size:12.8px;color:#333">Left-click &amp; drag to define group (or left-click to start defining a group polygon)</div>
<div class="a" style="left:1868px;top:1007px;width:1px;height:22px;background:#d0d0d0"></div>
<div class="a" style="left:1894px;top:1007px;width:1px;height:22px;background:#d0d0d0"></div>
<svg class="a" style="left:1872px;top:1007px" width="22" height="22"><path d="M14,2 L4,13 H10 L7,20 L18,9 H12 Z" fill="#1ea84a"/></svg>
<!-- taskbar -->
<div class="a" style="left:0;top:1030px;width:1920px;height:50px;background:linear-gradient(90deg,#1e1a18 0%,#231d1a 35%,#1a1614 55%,#0c0b0c 75%,#050506 100%)"></div>
<div class="a" style="left:0;top:1030px;width:60px;height:50px;background:#0e1117"></div>
<div class="a" style="left:60px;top:1030px;width:431px;height:50px;background:#f2f2f2"></div>
<svg class="a" style="left:0;top:1030px" width="1920" height="50" viewBox="0 1030 1920 50">
<g fill="#fff"><path d="M20,1047 L28,1046 V1054 H20 Z M29.5,1045.8 L40,1044.5 V1054 H29.5 Z M20,1055.5 H28 V1063.5 L20,1062.5 Z M29.5,1055.5 H40 V1065 L29.5,1063.7 Z"/></g>
<circle cx="85" cy="1055" r="10.5" fill="none" stroke="#111" stroke-width="3"/>
<path d="M461,1047 a3.5,3.5 0 0 1 7,0 v8 a3.5,3.5 0 0 1 -7,0 Z M458,1055 a6.5,6.5 0 0 0 13,0 M464.5,1061.5 v3 M460.5,1065 h8" fill="none" stroke="#222" stroke-width="1.5"/>
<!-- task view -->
<path d="M510,1046 h12 M510,1064 h12 M512,1049 h8 v12 h-8 z M528,1046 v6 M528,1058 v6" fill="none" stroke="#fff" stroke-width="1.3"/><rect x="526.5" y="1053" width="3" height="4" fill="#fff"/>
<!-- sublime -->
<rect x="569" y="1040" width="30" height="30" rx="2" fill="#3a3a3a"/><path d="M576,1050 L592,1045 V1050 L580,1054 L592,1058 V1063 L576,1068 V1063 L588,1059 L576,1055 Z" fill="#f7a21b"/>
<!-- chrome -->
<circle cx="645" cy="1055" r="14" fill="#db4437"/><path d="M645,1055 L657.1,1048 A14,14 0 0 1 638,1067.1 Z" fill="#0f9d58"/><path d="M645,1055 L638,1067.1 A14,14 0 0 1 631,1055 L631,1055 A14,14 0 0 1 657.1,1048 Z" fill="none"/><path d="M645,1041 A14,14 0 0 1 657.1,1048 L645,1055 Z" fill="#db4437"/><path d="M657.1,1048 A14,14 0 0 1 645,1069 L651,1058.5 Z" fill="#fcc934"/><path d="M632.9,1048 A14,14 0 0 0 645,1069 L651,1058.5 L645,1055Z" fill="#1ea362"/><circle cx="645" cy="1055" r="6.5" fill="#fff"/><circle cx="645" cy="1055" r="5" fill="#4a8af4"/>
<!-- explorer -->
<path d="M693,1044 h9 l2,2 h17 v19 h-28 z" fill="#f5c84c"/><rect x="693" y="1048" width="28" height="17" fill="#fbe08a"/><path d="M699,1066 V1059 h16 v7" fill="none" stroke="#3a9ad8" stroke-width="3.5"/>
<!-- edge -->
<path d="M757,1057 C757,1046 766,1041 773,1041 C781,1041 785,1047 785,1055 H764 C764,1062 773,1066 784,1061 V1067 C770,1073 757,1066 757,1057 Z M764,1051 H778 C778,1046 772,1044 769,1046 C766,1047 764,1049 764,1051Z" fill="#1a7fd4"/>
<!-- scanner -->
<rect x="816" y="1040" width="30" height="30" fill="#2f6fde"/><path d="M822,1060 h18 v4 h-18 z M825,1058 L838,1047" fill="none" stroke="#fff" stroke-width="1.8"/>
<!-- word -->
<rect x="886" y="1043" width="20" height="23" fill="#fff" stroke="#8aa" stroke-width="0.8"/><path d="M889,1048 h14 M889,1052 h14 M889,1056 h14 M889,1060 h14" stroke="#9ab0d0"/>
<path d="M878,1043.5 L895,1041 V1069 L878,1066.5 Z" fill="#2b5cab"/><text x="879.5" y="1062" font-family="Liberation Sans" font-weight="bold" font-size="15" fill="#fff">W</text>
<!-- orange wheel -->
<circle cx="956" cy="1055" r="13" fill="#f08a24"/><circle cx="956" cy="1055" r="7" fill="none" stroke="#fff" stroke-width="2"/><path d="M956,1044 v22 M945,1055 h22 M948,1047 l16,16 M964,1047 l-16,16" stroke="#fff" stroke-width="1.5"/><circle cx="956" cy="1055" r="3" fill="#f08a24"/>
<!-- store -->
<path d="M1003,1047 H1031 V1070 H1003 Z" fill="#fff"/><path d="M1011,1047 V1043 a6,6 0 0 1 12,0 V1047" fill="none" stroke="#fff" stroke-width="1.6"/>
<rect x="1010" y="1052" width="6" height="6" fill="#f25022"/><rect x="1018" y="1052" width="6" height="6" fill="#7fba00"/><rect x="1010" y="1060" width="6" height="6" fill="#00a4ef"/><rect x="1018" y="1060" width="6" height="6" fill="#ffb900"/>
<!-- network -->
<rect x="1079" y="1042" width="12" height="9" fill="#3a6ad0" stroke="#ccc"/><rect x="1066" y="1058" width="12" height="9" fill="#3a6ad0" stroke="#ccc"/><path d="M1070,1068 h12 M1083,1052 h12" stroke="#ccc" stroke-width="1.5"/><path d="M1082,1051 L1076,1057 L1080,1058 L1074,1063" stroke="#f0e020" stroke-width="2" fill="none"/>
<!-- git kraken-ish -->
<path d="M1141,1040 L1155,1054 L1141,1068 L1127,1054 Z" fill="#e05050"/><path d="M1141,1040 L1155,1054 L1141,1054 Z" fill="#60b040"/><path d="M1127,1054 L1141,1054 L1141,1068 Z" fill="#4a80d0"/><path d="M1141,1054 L1155,1054 L1141,1068Z" fill="#f0c040"/><path d="M1141,1046 V1066" stroke="#222" stroke-width="2"/>
<!-- eagle active -->
<rect x="1173" y="1030" width="61" height="50" fill="#3a3634"/>
<path d="M1193,1043 h16 l-3,5 h-8 v4 h6 l-2,4 h-4 v5 h10 l-3,5 h-12 z" fill="#e8902a"/>
<!-- paint -->
<path d="M1252,1058 C1250,1046 1262,1041 1272,1044 C1280,1047 1280,1054 1274,1055 C1270,1056 1270,1060 1272,1062 C1268,1068 1255,1067 1252,1058Z" fill="#e8e0c8"/><circle cx="1259" cy="1052" r="2" fill="#e03030"/><circle cx="1265" cy="1048" r="2" fill="#30a0e0"/><circle cx="1258" cy="1059" r="2" fill="#40b040"/><path d="M1266,1064 L1282,1042" stroke="#c89050" stroke-width="2.5"/>
<!-- underlines -->
<g fill="#76b9ed"><rect x="559" y="1077" width="50" height="3"/><rect x="621" y="1077" width="50" height="3"/><rect x="682" y="1077" width="50" height="3"/><rect x="1117" y="1077" width="50" height="3"/><rect x="1174" y="1077" width="60" height="3"/><rect x="1241" y="1077" width="50" height="3"/></g>
<!-- tray -->
<g fill="none" stroke="#fff" stroke-width="1.3">
<circle cx="1585" cy="1050" r="3"/><path d="M1579,1061 a6,6 0 0 1 12,0"/><circle cx="1577" cy="1054" r="2.5"/><path d="M1572,1063 a5,5 0 0 1 10,0"/>
<path d="M1622,1060 L1630,1052 L1638,1060"/>
<rect x="1661" y="1050" width="17" height="9"/><path d="M1679.5,1053 v3"/>
<path d="M1703,1062 a13,13 0 0 1 16,-14 M1707,1062 a9,9 0 0 1 11,-9.5 M1711,1062 a5,5 0 0 1 6,-5"/>
<path d="M1740,1052 h3 l5,-4 v14 l-5,-4 h-3 z M1751,1052 a4,4 0 0 1 0,6 M1754,1049 a8,8 0 0 1 0,12"/>
<path d="M1869,1046 h16 v11 h-5 l-3,3 v-3 h-8 z M1872,1050 h10 M1872,1053 h10"/>
</g>
<rect x="1663" y="1052" width="5" height="5" fill="#fff"/>
<circle cx="1886" cy="1065" r="7.5" fill="#333" stroke="#888"/>
<text x="1886" y="1069.5" font-family="Liberation Sans" font-weight="bold" font-size="12" fill="#fff" text-anchor="middle">2</text>
<path d="M1914.5,1030 V1080" stroke="#555"/>
</svg>
<div class="t" style="left:110px;top:1046px;font-size:17.5px;color:#2a2a2a">Type here to search</div>
<div class="t" style="left:1786px;top:1036px;font-size:13.5px;color:#fff">3:06 PM</div>
<div class="t" style="left:1782px;top:1059px;font-size:14px;color:#fff">3/5/2019</div>
<!-- title bar extras -->
<svg class="a" style="left:0;top:0" width="1920" height="29">
<rect x="3" y="5" width="17" height="17" fill="#fff" stroke="#999"/><rect x="2" y="3" width="17" height="14" fill="#3aa04a"/>
<text x="10.5" y="13.5" font-family="Liberation Sans" font-weight="bold" font-size="8" fill="#fff" text-anchor="middle">BRD</text>
<path d="M1765,14.5 H1777" stroke="#111" stroke-width="1"/>
<path d="M1823.5,11.5 h9 v9 h-9 z M1825.5,11.5 v-2 h9 v9 h-2" fill="none" stroke="#111" stroke-width="1"/>
<path d="M1882,9 L1893,20 M1893,9 L1882,20" stroke="#111" stroke-width="1.1"/>
</svg>
</body></html>
